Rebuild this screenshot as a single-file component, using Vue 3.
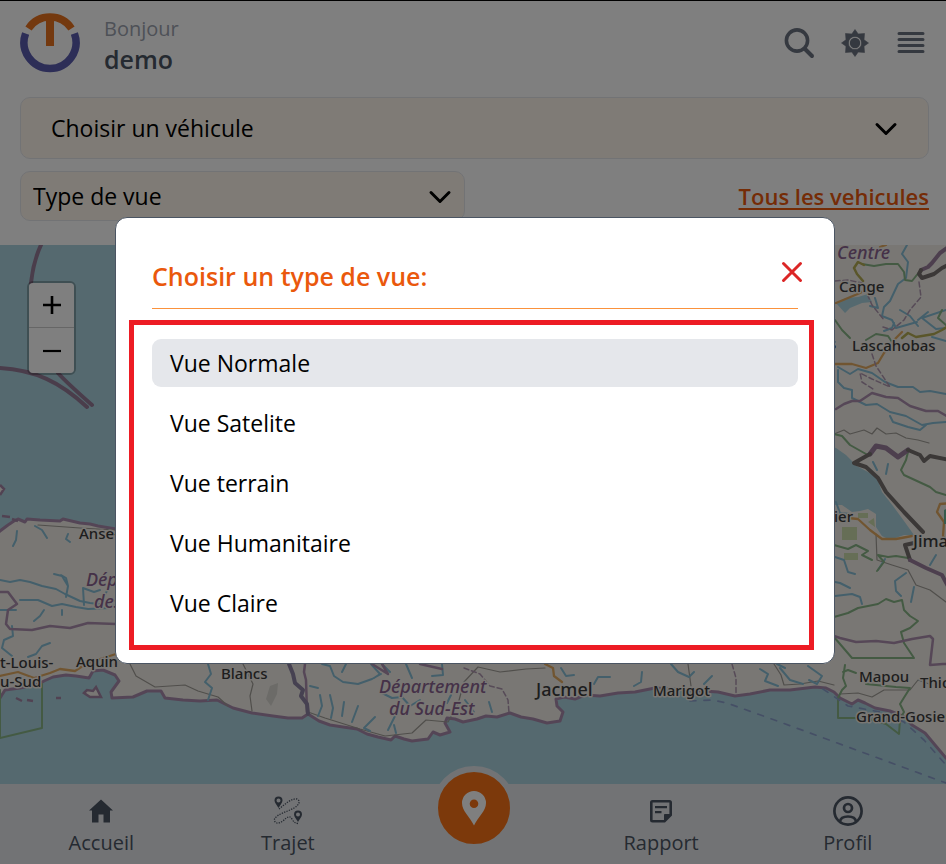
<script setup>
import { ref } from 'vue'

const views = ['Vue Normale', 'Vue Satelite', 'Vue terrain', 'Vue Humanitaire', 'Vue Claire']
const selected = ref('Vue Normale')
const open = ref(true)

const coast =
  'M-6 536L0 531L8 525L14 521L18 519L25 522L27 519L40 520L60 521L63 519L80 523L90 524L98 526L116 529L240 560L420 480L560 240L952 240V764L946 758L935 745L925 733L912 725L905 717L890 711L875 708L865 703L858 700L852 704L840 698L834 692L826 688L815 687L790 690L770 690L750 694L735 696L718 692L690 690L655 688L635 692L618 693L600 696L585 695L575 699L564 697L556 699L557 706L563 712L560 721L547 723L533 719L521 717L510 713L497 717L486 716L477 719L463 722L455 719L447 718L445 723L450 732L440 735L433 732L428 739L412 741L404 739L395 736L391 740L378 737L367 734L357 729L343 727L330 725L319 721L308 714L302 718L288 718L273 716L252 713L233 708L217 700L200 701L183 700L165 698L161 691L147 691L133 697L112 698L111 692L119 681L115 675L103 670L93 671L89 678L76 676L66 675L53 677L44 681L39 684L20 688L5 690L0 698L-6 700Z'

const rivers = [
  'M0 580L10 582L20 580L30 582L42 586L56 589L65 594L80 601L90 603L116 606',
  'M66 597L68 586L62 576L54 574M68 586L66 578L61 575M20 600L38 600L52 606L62 604L76 607L88 609L110 608M44 610L40 616L34 621M62 610L62 615M84 605L83 588L94 592L100 590',
  'M0 610L16 610M17 531L16 540L13 546M35 526L42 530L47 538M68 534L66 539L70 542M12 626L13 636L4 640L2 648L12 656M50 643L42 646L36 654L28 657M110 586L104 596',
  'M208 664L211 674L205 682L212 688L208 700M322 664L330 666L334 676L343 682L358 684L372 679L381 674M346 664L342 672M371 664L380 674L374 678M382 664L390 672M406 664L412 678M442 664L443 675L432 676',
  'M320 695L322 706L318 716M330 695L333 708L331 718M344 702L342 716M358 706L352 722M375 717L364 728L370 731M397 712L388 730M394 725L396 733M380 692L392 698L402 697L410 706L420 700M465 700L474 712M489 702L492 712M451 695L447 703M310 686L318 688',
  'M561 668L566 676L574 675M594 684L598 677L610 677M642 672L641 682L634 686M671 664L678 672L689 677L694 672M712 676L704 684M777 664L785 668M760 669L768 674L765 681L778 686M780 668L790 680L803 684M808 666L822 676L817 684L809 680',
  'M907 245L902 254L908 262L906 278L898 284L890 301L884 307L882 316L892 320L896 328L917 322M870 306L878 308L875 298M900 310L910 316L918 326M946 310L922 318L936 329L946 328M918 320L928 312M894 323L892 328L884 331M946 341L932 337',
  'M838 367L850 374L858 369L872 373L885 382L898 387L913 387L920 392L930 391L946 394M838 370L838 382L844 388L852 390L852 398L866 405L877 404L890 412L906 416L922 425L933 423L946 422M890 416L893 422L908 427L920 430L926 425',
  'M873 462L877 470M888 464L886 474M836 502L840 513L850 514M835 557L844 560L848 572L855 574M835 582L840 583L850 588M835 596L852 594L860 597L862 604M906 573L895 581L896 591L901 596M914 587L911 602M936 555L930 565M885 559L878 570'
]

const orangeRoads = [
  'M836 303L848 298L860 293L868 288', 'M834 364L852 364L866 368L878 363L884 353L894 340L902 332',
  'M848 518L858 519L870 530L882 539L896 539L912 536', 'M952 503L940 504L937 512L944 522L943 536L952 550',
  'M0 676L18 672L34 678L50 673L60 669L75 671L86 664L100 659L116 654', 'M545 664L553 668L554 676L562 682M880 247L886 245'
]

const greenLines = [
  'M862 264L874 266L886 264L898 264L904 272L905 280L912 281L920 271',
  'M835 320L842 330L850 338M866 340L876 334L888 336L892 342',
  'M834 434L842 436L850 445L866 454M908 452L906 460L901 470L904 475L930 487L936 492L946 495',
  'M834 545L848 549L856 545L868 551L862 555L872 560M878 555L888 557L896 556L908 558M878 555L884 562L877 571',
  'M834 617L848 613L858 608L868 606L878 604L886 599L894 602L902 600L904 610L910 616L918 621L910 628L901 632L904 643L914 658H852L834 637',
  'M845 665L843 678L846 686L842 690L838 698V718H866L886 724L899 734L900 719L904 712L900 704L910 688L896 687L866 684M843 672L848 670L856 673',
  'M42 684V728L0 738V690', 'M942 310L938 318L946 325'
]

const admin = [
  'M0 592L8 592L17 604L8 610L6 624L10 629L32 630L50 626L70 628L88 623L116 624',
  'M836 409L844 404L852 401L860 401L872 393L886 397L898 398L910 406L926 411L938 411L950 418',
  'M834 636L840 638L856 642L876 641L894 643L912 639L930 636L933 639L930 665L943 664L952 664',
  'M305 664L304 672L306 680L307 712M372 664L388 674L382 664M420 664L442 669'
]

const greyRoads = [
  'M130 664L136 676L155 687L185 685L198 691L218 697L228 706M38 525L80 528L116 530M243 664L253 684L250 696L252 711',
  'M308 712L325 718L360 729L385 736L412 733L426 720L448 722L458 704L464 682L478 667L500 672L526 669L545 668',
  'M688 664L691 686M774 664L781 675L784 685L800 684L818 681L834 685M840 694L858 693L872 697L884 690L910 690L918 680L932 685',
  'M834 434L844 430L850 434L864 430L872 434L877 428L886 434L896 433L906 438L918 440L929 443',
  'M876 534L877 560L892 565L908 570L916 585L930 590L946 602'
]

const places = [
  { t: 'Cange', x: 839, y: 292, s: 15 },
  { t: 'Lascahobas', x: 852, y: 351, s: 15 },
  { t: 's', x: 829, y: 349, s: 15 },
  { t: 'ier', x: 834, y: 522, s: 15 },
  { t: 'Jima', x: 913, y: 547, s: 17 },
  { t: 'Anse-', x: 79, y: 539, s: 15 },
  { t: 't-Louis-', x: 0, y: 668, s: 15 },
  { t: 'u-Sud', x: 0, y: 687, s: 15 },
  { t: 'Aquin', x: 76, y: 667, s: 15 },
  { t: 'Blancs', x: 221, y: 679, s: 15 },
  { t: 'Jacmel', x: 536, y: 696, s: 18 },
  { t: 'Marigot', x: 653, y: 696, s: 15 },
  { t: 'Mapou', x: 859, y: 682, s: 15 },
  { t: 'Thio', x: 920, y: 688, s: 15 },
  { t: 'Grand-Gosier', x: 856, y: 722, s: 15 }
]

const regions = [
  { t: 'Centre', x: 837, y: 259 },
  { t: 'Département', x: 86, y: 586 },
  { t: 'des Nippes', x: 94, y: 608 },
  { t: 'Département', x: 379, y: 693 },
  { t: 'du Sud-Est', x: 389, y: 715 }
]
</script>

<template>
  <div class="app">
    <header class="topbar">
      <svg class="logo" viewBox="0 0 60 60" aria-hidden="true">
        <path d="M8.500 15.500A26 26 0 0 1 51.500 15.500" fill="none" stroke="#e8731f" stroke-width="7.500" />
        <path d="M26 5H34V33H26Z" fill="#e8731f" />
        <path d="M5.600 20.500A26 26 0 1 0 54.400 20.500" fill="none" stroke="#5a5cae" stroke-width="7.500" />
      </svg>
      <div class="greeting">
        <span class="hello">Bonjour</span>
        <strong class="user">demo</strong>
      </div>
      <div class="actions">
        <button type="button" aria-label="Rechercher">
          <svg width="32" height="32" viewBox="0 0 32 32" fill="none" stroke="currentColor">
            <circle cx="14" cy="13.500" r="10.600" stroke-width="3.600" />
            <path d="M22 22L29 29" stroke-width="4" stroke-linecap="round" />
          </svg>
        </button>
        <button type="button" aria-label="Thème">
          <svg width="32" height="32" viewBox="-16 -16 32 32" fill="currentColor">
            <path fill-rule="evenodd" d="M0-13.500L3.200-9L9.500-9.500L9-3.200L13.500 0L9 3.200L9.500 9.500L3.200 9L0 13.500L-3.200 9L-9.500 9.500L-9 3.200L-13.500 0L-9-3.200L-9.500-9.500L-3.200-9ZM0-6.600A6.600 6.600 0 1 0 0 6.600A6.600 6.600 0 1 0 0-6.600Z" stroke="currentColor" stroke-width="0.600" stroke-linejoin="round" />
            <circle r="5.200" />
          </svg>
        </button>
        <button type="button" aria-label="Menu">
          <svg width="32" height="32" viewBox="0 0 32 32" stroke="currentColor" stroke-width="3" stroke-linecap="round">
            <path d="M4 6.500H28M4 12.500H28M4 18.500H28M4 24.500H28" />
          </svg>
        </button>
      </div>
    </header>

    <section class="filters">
      <div class="field vehicle">
        <select aria-label="Choisir un véhicule">
          <option>Choisir un véhicule</option>
        </select>
        <svg class="chevron" width="24" height="24" viewBox="0 0 24 24"><path d="M3 8.500L12 17.500L21 8.500" /></svg>
      </div>
      <div class="row">
        <div class="field kind">
          <select aria-label="Type de vue">
            <option>Type de vue</option>
          </select>
          <svg class="chevron" width="24" height="24" viewBox="0 0 24 24"><path d="M3 8.500L12 17.500L21 8.500" /></svg>
        </div>
        <a class="all" href="#">Tous les vehicules</a>
      </div>
    </section>

    <main class="map">
      <svg class="tiles" viewBox="0 245 946 539" preserveAspectRatio="xMidYMid slice" role="img" aria-label="Carte">
        <rect x="-400" y="0" width="1800" height="1200" fill="#aad3df" />
        <path :d="coast" fill="#f2efe9" stroke="#a98bad" stroke-width="3" stroke-linejoin="round" />
        <path d="M41 245C33 262 32 275 31 283M0 368C35 370 60 382 87 407M58 373C66 382 75 390 92 405" fill="none" stroke="#957b97" stroke-width="4" stroke-linecap="round" />
        <path d="M84 693L87 690L93 691L96 687L101 697L90 697ZM0 485L4 489L0 495M2 516L10 517M12 519L18 521M16 698L22 701M27 700L33 701M56 698L61 698" fill="#f2efe9" stroke="#a385a5" stroke-width="2.500" />
        <path d="M830 446L836 448L846 455L852 461L855 465L868 472L877 478L882 492L893 506L904 521L914 535L904 535L890 540L882 536L876 527L876 514L868 509L860 511L852 512L842 505L830 505Z" fill="#aad3df" />
        <path d="M836 303L846 298L858 297L868 294L872 302L862 303L850 308L845 313Z" fill="#aad3df" />
        <path d="M842 527H857V540H842ZM858 513H868V518H858ZM844 553H858V560H844ZM868 522L874 518L875 527Z" fill="#cddcad" />
        <path d="M270 686L278 683L277 694L271 706L266 699Z" fill="#d8d6d0" />
        <g fill="none" stroke-linejoin="round" stroke-linecap="round">
          <path v-for="d in greyRoads" :key="d" :d="d" stroke="#a19d97" stroke-width="1.200" />
          <path v-for="d in rivers" :key="d" :d="d" stroke="#88bfd6" stroke-width="2" />
          <path v-for="d in greenLines" :key="d" :d="d" stroke="#88b586" stroke-width="2" />
          <path v-for="d in admin" :key="d" :d="d" stroke="#ac8fae" stroke-width="2.500" />
          <path v-for="d in orangeRoads" :key="d" :d="d" stroke="#e3ab62" stroke-width="2.300" />
          <path d="M863 281L857 274L854 268L858 262L864 265M902 338L908 333L916 337L934 334L942 330L950 325" stroke="#b5ac54" stroke-width="2.500" />
          <path d="M289 664L293 674L295 683L303 690L301 696L307 704L308 714" stroke="#8d83a3" stroke-width="4" />
          <path d="M950 246L940 253L932 263L928 267L921 270" stroke="#9a7f9d" stroke-width="4" />
          <path d="M950 264L942 268L934 274L922 278L919 274L921 270" stroke="#77716f" stroke-width="4" />
          <path d="M870 454L876 446L886 448L898 457L908 450" stroke="#9a7f9d" stroke-width="5" />
          <path d="M908 450L920 455L924 461L930 456L950 460M870 454L854 463L866 467L878 478L886 492L904 512L923 532M914 543L905 545L910 560" stroke="#77716f" stroke-width="4" />
          <path d="M910 560L926 568L942 575L950 590" stroke="#9a7f9d" stroke-width="4" />
          <path d="M872 354L876 366L888 384L890 387L872 379L860 373L862 382L873 389M919 282L921 297L910 310L904 320L892 330L883 327M835 281L848 280L862 283L872 305L884 320M732 664L736 678V695M464 668L480 674L490 686L502 689L508 700L509 713" stroke="#ae96af" stroke-width="1.500" stroke-dasharray="5 3" />
          <path d="M690 701L712 700L727 703L780 722L946 783M823 689L848 706L880 712L904 722L924 740L946 765" stroke="#8b9fcb" stroke-width="1.700" stroke-dasharray="6 8" />
          <path d="M950 507V524H944V510Z" fill="#6fb79a" stroke="none" />
        </g>
        <g class="regions">
          <text v-for="(r, i) in regions" :key="i" :x="r.x" :y="r.y">{{ r.t }}</text>
        </g>
        <g class="places">
          <text v-for="p in places" :key="p.t" :x="p.x" :y="p.y" :font-size="p.s">{{ p.t }}</text>
        </g>
      </svg>
      <div class="zoom">
        <button type="button" aria-label="Zoom avant">
          <svg width="20" height="20" viewBox="0 0 20 20"><path d="M1 10H19M10 1V19" stroke="#000" stroke-width="2.600" /></svg>
        </button>
        <button type="button" aria-label="Zoom arrière">
          <svg width="20" height="20" viewBox="0 0 20 20"><path d="M1 10H19" stroke="#000" stroke-width="2.200" /></svg>
        </button>
      </div>
    </main>

    <nav class="tabs">
      <a href="#">
        <svg width="32" height="32" viewBox="0 0 32 32" fill="currentColor"><path d="M16 4.500L28 15.500H25V27.500H18.500V19.500H13.500V27.500H7V15.500H4Z" /></svg>
        <span>Accueil</span>
      </a>
      <a href="#">
        <svg width="32" height="32" viewBox="0 0 32 32" fill="currentColor">
          <path fill-rule="evenodd" d="M6.500 1.500A4 4 0 0 0 2.500 5.500C2.500 8 5 10 6.500 13C8 10 10.500 8 10.500 5.500A4 4 0 0 0 6.500 1.500ZM6.500 3.500A2 2 0 1 1 6.500 7.500A2 2 0 1 1 6.500 3.500Z" />
          <path fill-rule="evenodd" d="M26 15.500A4 4 0 0 0 22 19.500C22 22 24.500 24 26 27C27.500 24 30 22 30 19.500A4 4 0 0 0 26 15.500ZM26 17.500A2 2 0 1 1 26 21.500A2 2 0 1 1 26 17.500Z" />
          <path d="M7 14C13 9 20 3 25 4C29 6 27 10 22 13C15 17 5 19 2.500 24C2 29 7 29 11 26C15 22 18 20 20 24C21.500 27 23 28 26 28.500" fill="none" stroke="currentColor" stroke-width="1.300" stroke-dasharray="1.300 1.200" />
        </svg>
        <span>Trajet</span>
      </a>
      <a href="#" class="center" aria-label="Carte">
        <span class="fab">
          <svg width="36" height="36" viewBox="0 0 36 36"><path fill="#fff" fill-rule="evenodd" d="M18 1A12 12 0 0 0 6 13C6 21 14 27 18 35.500C22 27 30 21 30 13A12 12 0 0 0 18 1ZM18 9.500A4.300 4.300 0 1 1 18 18.100A4.300 4.300 0 1 1 18 9.500Z" /></svg>
        </span>
      </a>
      <a href="#">
        <svg width="32" height="32" viewBox="0 0 32 32" fill="none" stroke="currentColor" stroke-width="2.600">
          <path d="M7.500 6.300H24.500Q25.700 6.300 25.700 7.500V20L19.500 26.200H7.500Q6.300 26.200 6.300 25V7.500Q6.300 6.300 7.500 6.300Z" />
          <path d="M10 12.200H22M10 17.200H16.500" stroke-width="2.300" />
          <path d="M19.500 26.200V19.500H25.700Z" fill="currentColor" stroke-width="1" />
        </svg>
        <span>Rapport</span>
      </a>
      <a href="#">
        <svg width="32" height="32" viewBox="0 0 32 32" fill="none" stroke="currentColor" stroke-width="2.700">
          <circle cx="16" cy="16" r="13.600" />
          <circle cx="16" cy="13" r="4" />
          <path d="M8 26.500C8.500 22.500 11.500 21.500 16 21.500C20.500 21.500 23.500 22.500 24 26.500" />
        </svg>
        <span>Profil</span>
      </a>
    </nav>

    <div v-if="open" class="overlay">
      <div class="dialog" role="dialog" aria-modal="true" aria-labelledby="dialog-title">
        <div class="dialog-head">
          <h2 id="dialog-title">Choisir un type de vue:</h2>
          <button type="button" class="close" aria-label="Fermer" @click="open = false">
            <svg width="24" height="24" viewBox="0 0 24 24"><path d="M3.500 3.500L20.500 20.500M20.500 3.500L3.500 20.500" stroke="#dc2626" stroke-width="3" stroke-linecap="round" /></svg>
          </button>
        </div>
        <div class="list">
          <button
            v-for="v in views"
            :key="v"
            type="button"
            class="item"
            :class="{ active: v === selected }"
            @click="selected = v"
          >{{ v }}</button>
        </div>
      </div>
    </div>
  </div>
</template>

<style>
body {
  margin: 0;
}
</style>

<style scoped>
.app {
  --pad-left: 20px;
  --pad-right: 17px;
  box-sizing: border-box;
  display: flex;
  flex-direction: column;
  min-height: 100vh;
  border-top: 1px solid #000;
  background: #fff;
  color: #000;
  font-family: "Open Sans", "Noto Sans", sans-serif;
  font-size: 23px;
}
button,
select {
  margin: 0;
  padding: 0;
  border: 0;
  background: none;
  color: inherit;
  font: inherit;
}
svg {
  display: block;
}
.topbar {
  display: flex;
  align-items: flex-start;
  box-sizing: border-box;
  height: 84px;
  padding: 12px var(--pad-right) 0 var(--pad-left);
}
.logo {
  width: 60px;
  height: 60px;
}
.greeting {
  display: flex;
  flex-direction: column;
  margin-left: 24px;
  padding-top: 2px;
}
.hello {
  color: #9ca3af;
  font-size: 20px;
  line-height: 28px;
}
.user {
  color: #4b5563;
  font-size: 25px;
  font-weight: 600;
  line-height: 32px;
}
.actions {
  display: flex;
  gap: 24px;
  margin-left: auto;
  padding-top: 14px;
  margin-right: 2px;
  color: #6b7280;
}
.filters {
  display: flex;
  flex-direction: column;
  gap: 12px;
  padding: 12px var(--pad-right) 24px var(--pad-left);
}
.field {
  display: grid;
  align-items: center;
  box-sizing: border-box;
  border: 1px solid #e5e7eb;
  border-radius: 10px;
  background: #fff7ed;
}
.field select {
  grid-area: 1 / 1;
  width: 100%;
  height: 100%;
  appearance: none;
}
.chevron {
  grid-area: 1 / 1;
  justify-self: end;
  pointer-events: none;
  fill: none;
  stroke: #000;
  stroke-width: 3;
  stroke-linecap: round;
  stroke-linejoin: round;
}
.vehicle {
  height: 62px;
}
.vehicle select {
  padding-left: 30px;
}
.vehicle .chevron {
  margin-right: 30px;
}
.row {
  display: flex;
  align-items: center;
  justify-content: space-between;
}
.kind {
  width: 49%;
  height: 50px;
}
.kind select {
  padding-left: 12px;
}
.kind .chevron {
  margin-right: 12px;
}
.all {
  color: #ea580c;
  font-size: 22px;
  font-weight: 600;
  text-decoration-thickness: 2px;
  text-decoration-skip-ink: none;
  text-underline-offset: 3px;
}
.map {
  position: relative;
  flex: 1;
  min-height: 300px;
  overflow: hidden;
}
.tiles {
  position: absolute;
  inset: 0;
  width: 100%;
  height: 100%;
}
.places text,
.regions text {
  font-family: "Noto Sans", sans-serif;
  font-weight: 500;
  paint-order: stroke;
  stroke: #f2efe9;
  stroke-width: 3px;
  stroke-linejoin: round;
}
.places {
  fill: #3c3c3c;
}
.regions {
  fill: #8a6390;
  font-size: 18px;
  font-style: italic;
}
.zoom {
  position: absolute;
  top: 36px;
  left: 27px;
  display: flex;
  flex-direction: column;
  width: 45px;
  border: 2px solid rgba(0, 0, 0, 0.25);
  border-radius: 6px;
  background-clip: padding-box;
}
.zoom button {
  display: grid;
  place-items: center;
  height: 45px;
  background: #fff;
}
.zoom button:first-child {
  border-bottom: 1px solid #ccc;
  border-radius: 4px 4px 0 0;
}
.zoom button:last-child {
  border-radius: 0 0 4px 4px;
}
.tabs {
  display: grid;
  grid-template-columns: repeat(5, 1fr);
  box-sizing: border-box;
  height: 80px;
  padding: 0 5px 0 8px;
  background: #e5e7eb;
}
.tabs a {
  position: relative;
  display: flex;
  flex-direction: column;
  align-items: center;
  padding-top: 11px;
  color: #4b5563;
  font-size: 20px;
  line-height: 32px;
  text-decoration: none;
}
.fab {
  position: absolute;
  top: -18px;
  display: grid;
  place-items: center;
  width: 72px;
  height: 72px;
  border: 6px solid #e5e7eb;
  border-radius: 50%;
  background: #f97316;
}
.overlay {
  position: fixed;
  inset: 1px 0 0;
  display: flex;
  align-items: center;
  justify-content: center;
  padding: 16px 0 0 4px;
  background: rgba(0, 0, 0, 0.5);
}
.dialog {
  box-sizing: border-box;
  width: 90%;
  max-width: 720px;
  padding: 36px;
  border: 1px solid #4b5563;
  border-radius: 12px;
  background: #fff;
}
.dialog-head {
  display: flex;
  justify-content: space-between;
  height: 54px;
  margin-bottom: 30px;
  border-bottom: 1px solid #fb923c;
}
h2 {
  margin: 0;
  color: #ea580c;
  font-size: 25px;
  font-weight: 600;
  line-height: 44px;
}
.close {
  width: 24px;
  height: 24px;
  margin: 6px -6px 0 0;
}
.list {
  position: relative;
  display: flex;
  flex-direction: column;
  gap: 12px;
}
.list::after {
  content: "";
  position: absolute;
  inset: -19px -16px -23px -23px;
  border: 5px solid #ed1c24;
  pointer-events: none;
}
.item {
  height: 48px;
  padding: 0 18px;
  border-radius: 9px;
  text-align: left;
}
.item.active {
  background: #e5e7eb;
}
</style>
